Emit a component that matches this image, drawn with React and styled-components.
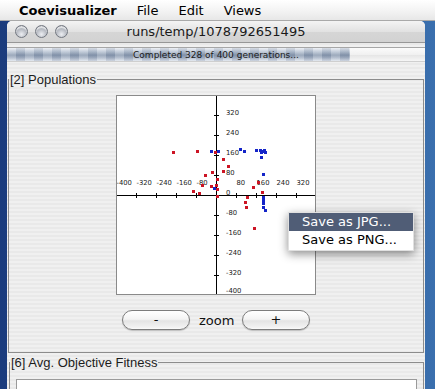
import React from "react";
import styled, { createGlobalStyle } from "styled-components";

const GlobalStyle = createGlobalStyle`
  html, body {
    margin: 0;
    padding: 0;
  }
  body {
    width: 435px;
    height: 389px;
    overflow: hidden;
    font-family: "DejaVu Sans", "Noto Sans", sans-serif;
  }
`;

const RED = [
  [57.3, 57.3], [81.3, 56.3], [99, 57.3], [107.3, 64.3], [112.3, 71.3],
  [107.3, 76.3], [96.3, 77.3], [89.3, 80.3], [101.3, 84.3], [100.7, 90],
  [86, 90.3], [95, 91.3], [101.3, 94], [77.3, 96.3], [83.3, 98.3],
  [101.3, 101], [137.3, 92.3], [142.3, 87.3], [146.3, 97.7], [131.3, 102.3],
  [129, 107.3], [130, 112.3], [138.3, 133.3],
];

const BLUE = [
  [95.7, 56.3], [102.3, 56.3], [124, 54.3], [128.3, 56.3], [140.7, 55.3],
  [144.7, 55.7], [146.7, 56.7], [148.7, 55.7], [149.7, 57], [145.5, 57.5],
  [145.7, 62.3], [147.3, 79.3], [98, 93.3], [147.3, 102.3], [147.3, 105.7],
  [147.3, 108], [147.3, 112.3], [149.3, 115],
];

const X_LABELS = [-400, -320, -240, -160, -80, 80, 160, 240, 320];
const Y_LABELS = [320, 240, 160, 80, 0, -80, -160, -240, -320, -400];
const TICKS = [20, 40, 60, 80, 120, 140, 160, 180];

const Desktop = styled.div`
  position: relative;
  width: 435px;
  height: 389px;
  overflow: hidden;
  display: flex;
  flex-direction: column;
  background: linear-gradient(90deg, #1b3c7d 0%, #25518f 50%, #3a6fae 100%);
`;

const MenuBar = styled.div`
  flex: none;
  height: 21px;
  box-sizing: border-box;
  display: flex;
  align-items: center;
  gap: 20px;
  padding: 1px 0 0 19px;
  background: linear-gradient(#ffffff, #f3f3f3 55%, #e7e7e7);
  border-bottom: 1px solid #a9a9a9;
  font-size: 13px;
  color: #000;
`;

const MenuTitle = styled.span`
  font-weight: ${(p) => (p.$app ? 700 : 400)};
`;

const Window = styled.div`
  flex: 1;
  min-height: 0;
  margin: 0 10px 0 7px;
  display: flex;
  flex-direction: column;
  border-radius: 5px 5px 0 0;
  overflow: hidden;
  background: repeating-linear-gradient(#f0f0f0 0 2px, #e9e9e9 2px 4px);
`;

const TitleBar = styled.div`
  flex: none;
  height: 22px;
  box-sizing: border-box;
  display: grid;
  grid-template-columns: 1fr auto 1fr;
  align-items: center;
  background: linear-gradient(#f4f4f4, #e2e2e2 50%, #d6d6d6 51%, #d2d2d2);
  border-bottom: 1px solid #979797;
`;

const Lights = styled.div`
  display: flex;
  gap: 7px;
  padding-left: 8px;
`;

const Light = styled.span`
  width: 13px;
  height: 13px;
  box-sizing: border-box;
  border-radius: 50%;
  border: 1px solid #737881;
  background: radial-gradient(circle at 50% 75%, #eceef2 0%, #b2b6be 55%, #868b94 100%);
  box-shadow: inset 0 2px 1px rgba(255, 255, 255, 0.7);
`;

const Title = styled.div`
  font-size: 13px;
  color: #1a1a1a;
`;

const ProgressTrack = styled.div`
  flex: none;
  position: relative;
  height: 15px;
  margin-top: 4px;
  box-sizing: border-box;
  border-top: 1px solid #a6a6a6;
  border-bottom: 1px solid #cfcfcf;
  background: linear-gradient(#fbfbfb, #f1f1f1 50%, #e4e4e4 51%, #f6f6f6);
  overflow: hidden;
`;

const ProgressFill = styled.div`
  height: 100%;
  background:
    repeating-linear-gradient(90deg, rgba(255, 255, 255, 0.18) 0 9px, rgba(80, 95, 125, 0.12) 9px 18px),
    linear-gradient(#e9edf3, #b4c0d0 30%, #8797ae 55%, #a6b3c5 75%, #dfe5ee);
`;

const ProgressLabel = styled.div`
  position: absolute;
  inset: 0;
  display: flex;
  align-items: center;
  justify-content: center;
  font-size: 9px;
  color: #202020;
`;

const Panel = styled.fieldset`
  margin: ${(p) => p.$top}px 1px 0 ${(p) => p.$left}px;
  padding: 0;
  border: 1px solid #8c8c8c;
  min-width: 0;
`;

const Legend = styled.legend`
  margin-left: 0;
  padding: 0 1px;
  font: 13px/15px "Liberation Sans", Arial, sans-serif;
  color: #1c1c1c;
`;

const PlotBody = styled.div`
  display: flex;
  flex-direction: column;
  align-items: center;
  gap: 15px;
  padding: 8px 0 22px;
`;

const PlotFrame = styled.div`
  width: 200px;
  height: 200px;
  box-sizing: border-box;
  border: 1px solid #8a8a8a;
  background: #fff;
  svg {
    display: block;
  }
`;

const ZoomRow = styled.div`
  display: flex;
  align-items: center;
  gap: 9px;
`;

const ZoomButton = styled.button`
  width: 68px;
  height: 20px;
  box-sizing: border-box;
  padding: 0;
  border: 1px solid #7c7c7c;
  border-radius: 10px;
  background: linear-gradient(#ffffff, #f4f4f4 45%, #e4e4e4 55%, #f2f2f2 90%, #fbfbfb);
  box-shadow: 0 1px 1px rgba(0, 0, 0, 0.2);
  font: 13px "DejaVu Sans", sans-serif;
  line-height: 18px;
  color: #111;
`;

const ZoomLabel = styled.span`
  font-size: 13px;
  color: #111;
  width: 34px;
  text-align: center;
`;

const FitnessBody = styled.div`
  padding: 9px 6px 0;
`;

const FitnessBox = styled.div`
  height: 40px;
  border: 1px solid #9a9a9a;
  background: #fff;
`;

const ContextMenu = styled.div`
  position: absolute;
  left: 288px;
  top: 212px;
  width: 126px;
  padding-bottom: 1px;
  background: rgba(255, 255, 255, 0.97);
  border: 1px solid rgba(0, 0, 0, 0.12);
  box-sizing: border-box;
  box-shadow: 0 3px 9px rgba(0, 0, 0, 0.45);
`;

const ContextItem = styled.div`
  height: 18px;
  line-height: 18px;
  padding-left: 13px;
  font-size: 13px;
  color: ${(p) => (p.$active ? "#fff" : "#000")};
  background: ${(p) => (p.$active ? "#505d76" : "transparent")};
`;

function Scatter() {
  return (
    <svg width="198" height="198" viewBox="1 1 198 198" shapeRendering="crispEdges">
      <line x1="0" y1="100.5" x2="200" y2="100.5" stroke="#000" />
      <line x1="100.5" y1="0" x2="100.5" y2="200" stroke="#000" />
      {TICKS.map((t) => (
        <g key={t}>
          <line x1={t + 0.5} y1="98" x2={t + 0.5} y2="103" stroke="#000" />
          <line x1="98" y1={t + 0.5} x2="103" y2={t + 0.5} stroke="#000" />
        </g>
      ))}
      <g fontFamily="DejaVu Sans, sans-serif" fontSize="6.8" fill="#222" shapeRendering="auto">
        {X_LABELS.map((v) => (
          <text key={v} x={100 + v / 4 + 0.5} y="89.5">
            {v}
          </text>
        ))}
        {Y_LABELS.map((v) => (
          <text key={v} x="110" y={Math.min(100 - v / 4 - 0.5, 198)}>
            {v}
          </text>
        ))}
      </g>
      {RED.map(([x, y], i) => (
        <rect key={"r" + i} x={x - 1.5} y={y - 1.5} width="3" height="3" fill="#cc1424" />
      ))}
      {BLUE.map(([x, y], i) => (
        <rect key={"b" + i} x={x - 1.5} y={y - 1.5} width="3" height="3" fill="#1424c8" />
      ))}
    </svg>
  );
}

export default function App() {
  const done = 328;
  const total = 400;

  return (
    <Desktop>
      <GlobalStyle />
      <MenuBar>
        <MenuTitle $app>Coevisualizer</MenuTitle>
        <MenuTitle>File</MenuTitle>
        <MenuTitle>Edit</MenuTitle>
        <MenuTitle>Views</MenuTitle>
      </MenuBar>

      <Window>
        <TitleBar>
          <Lights>
            <Light />
            <Light />
            <Light />
          </Lights>
          <Title>runs/temp/1078792651495</Title>
          <span />
        </TitleBar>

        <ProgressTrack>
          <ProgressFill style={{ width: `${(done / total) * 100}%` }} />
          <ProgressLabel>
            Completed {done} of {total} generations...
          </ProgressLabel>
        </ProgressTrack>

        <Panel $top={10} $left={1}>
          <Legend>[2] Populations</Legend>
          <PlotBody>
            <PlotFrame>
              <Scatter />
            </PlotFrame>
            <ZoomRow>
              <ZoomButton>-</ZoomButton>
              <ZoomLabel>zoom</ZoomLabel>
              <ZoomButton>+</ZoomButton>
            </ZoomRow>
          </PlotBody>
        </Panel>

        <Panel $top={2} $left={2}>
          <Legend>[6] Avg. Objective Fitness</Legend>
          <FitnessBody>
            <FitnessBox />
          </FitnessBody>
        </Panel>
      </Window>

      <ContextMenu>
        <ContextItem $active>Save as JPG...</ContextItem>
        <ContextItem>Save as PNG...</ContextItem>
      </ContextMenu>
    </Desktop>
  );
}
